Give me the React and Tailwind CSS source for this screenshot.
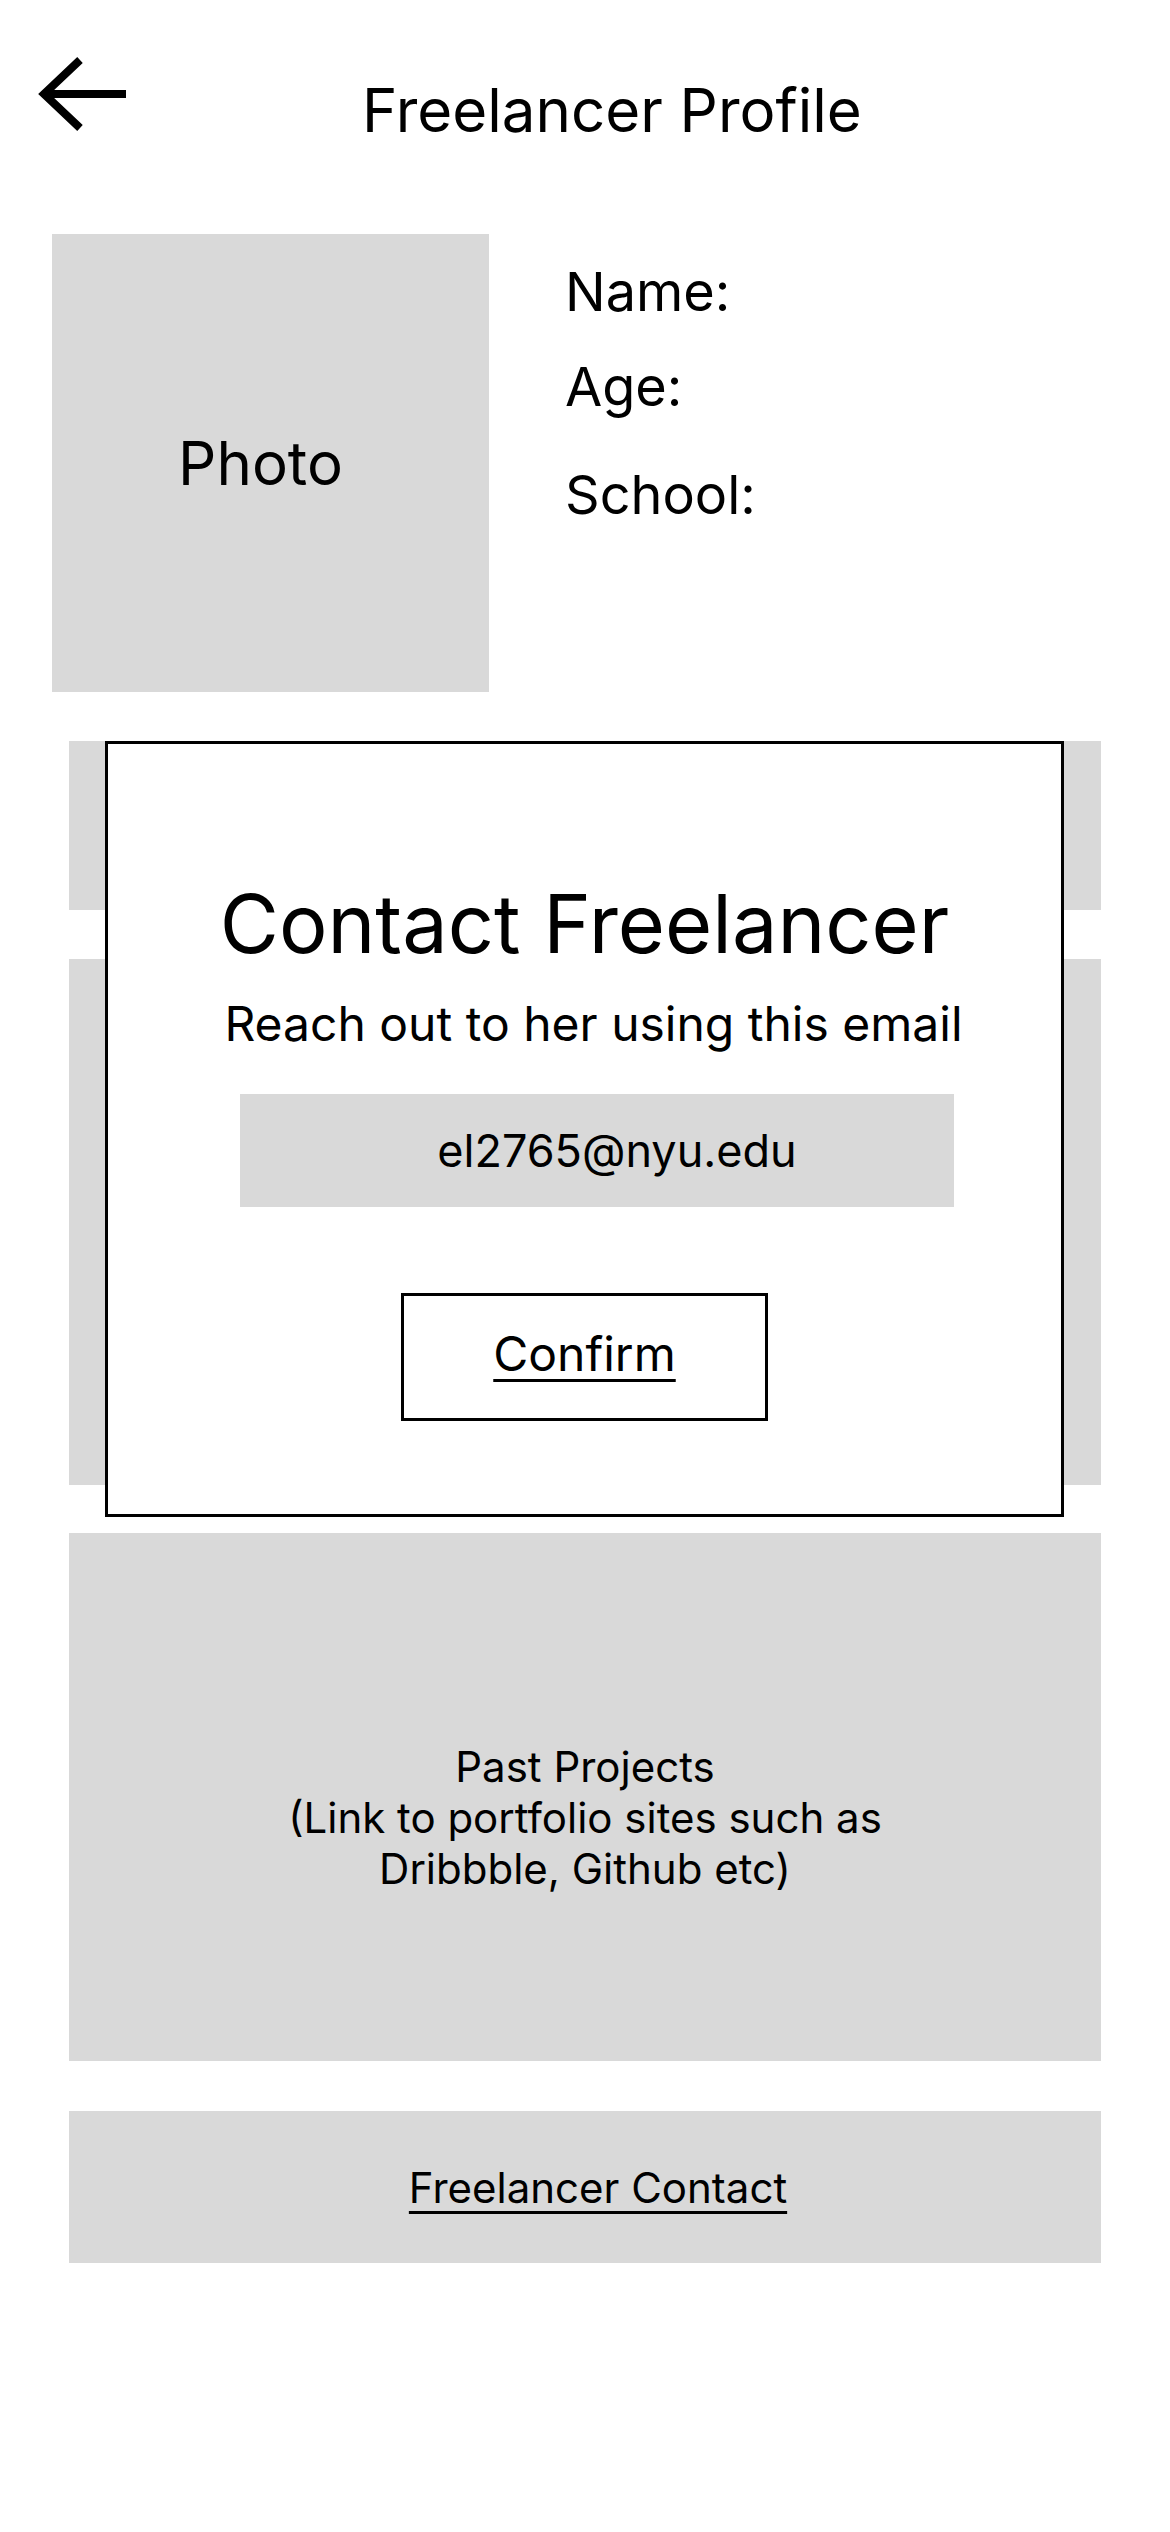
import React from 'react';

const font = { fontFamily: 'Inter, "Noto Sans", sans-serif' };

// back arrow drawn as in the wireframe
const BackArrow = () => (
  <svg width="96" height="84" viewBox="0 0 96 84" className="shrink-0">
    <path d="M42 6 L6 40 L42 74" fill="none" stroke="black" strokeWidth="8" strokeLinejoin="miter" />
    <path d="M6 40 L88 40" fill="none" stroke="black" strokeWidth="8" />
  </svg>
);

const App = () => {
  return (
    <div className="w-[1170px] min-h-[2532px] bg-white text-black relative" style={font}>
      {/* header */}
      <div className="flex items-start h-[234px]">
        <div className="ml-[38px] mt-[54px]">
          <BackArrow />
        </div>
        <h1 className="ml-[228px] mt-[74px] text-[60px] leading-[72px] font-normal">Freelancer Profile</h1>
      </div>

      {/* photo + info */}
      <div className="flex items-start">
        <div className="ml-[52px] w-[437px] h-[458px] bg-[#d9d9d9] flex items-center justify-center pr-[20px]">
          <span className="text-[60px] leading-[72px]">Photo</span>
        </div>
        <div className="ml-[76px] flex flex-col text-[54px] leading-[64px]">
          <span className="mt-[26px]">Name:</span>
          <span className="mt-[31px]">Age:</span>
          <span className="mt-[44px]">School:</span>
        </div>
      </div>

      {/* sections */}
      <div className="ml-[69px] w-[1032px] flex flex-col">
        <div className="mt-[49px] h-[169px] bg-[#d9d9d9]" />
        <div className="mt-[49px] h-[526px] bg-[#d9d9d9]" />
        <div className="mt-[48px] h-[528px] bg-[#d9d9d9] flex items-center justify-center pt-[40px]">
          <p className="text-[42px] leading-[51px] text-center">
            Past Projects
            <br />
            (Link to portfolio sites such as
            <br />
            Dribbble, Github etc)
          </p>
        </div>
        <div className="mt-[50px] h-[152px] bg-[#d9d9d9] flex items-center justify-center pl-[26px]">
          <span className="text-[42px] leading-[51px] underline decoration-[3px] underline-offset-[8px]">
            Freelancer Contact
          </span>
        </div>
      </div>

      {/* contact modal overlay */}
      <div className="absolute left-[105px] top-[741px] w-[959px] h-[776px] bg-white border-[3px] border-black flex flex-col items-center">
        <h2 className="mt-[132px] text-[81px] leading-[96px] font-normal">Contact Freelancer</h2>
        <p className="mt-[23px] pl-[18px] text-[48px] leading-[58px]">Reach out to her using this email</p>
        <div className="mt-[41px] self-start ml-[132px] w-[714px] h-[113px] bg-[#d9d9d9] flex items-center justify-center pl-[40px]">
          <span className="text-[45px] leading-[54px]">el2765@nyu.edu</span>
        </div>
        <button className="mt-[86px] w-[367px] h-[128px] border-[3px] border-black bg-white flex items-center justify-center pb-[6px]">
          <span className="text-[48px] leading-[58px] underline decoration-[3px] underline-offset-[8px]">Confirm</span>
        </button>
      </div>
    </div>
  );
};

export default App;
